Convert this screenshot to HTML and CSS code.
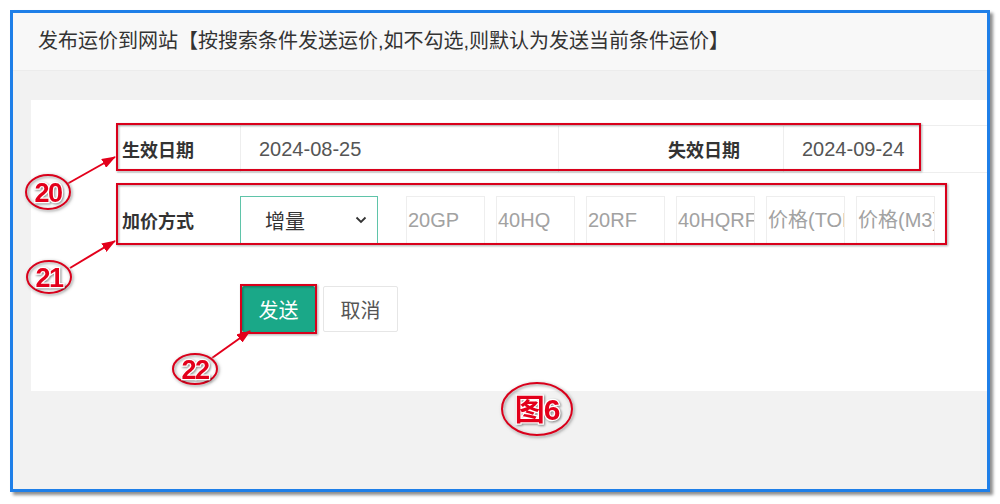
FILE: index.html
```html
<!DOCTYPE html>
<html lang="zh-CN">
<head>
    <meta charset="UTF-8">
    <title>发布运价到网站</title>
    <link rel="stylesheet" href="styles.css">
</head>
<body>
    <div class="frame">
        <div class="dlg-title">发布运价到网站【按搜索条件发送运价,如不勾选,则默认为发送当前条件运价】</div>
        <div class="dlg-body">
            <div class="panel">
                <div class="date-row">
                    <div class="cell cell-label">生效日期</div>
                    <div class="cell cell-start">2024-08-25</div>
                    <div class="cell cell-label2">失效日期</div>
                    <div class="cell cell-end">2024-09-24</div>
                </div>

                <div class="price-row">
                    <div class="row-label">加价方式</div>
                    <div class="fake-select">
                        <span>增量</span>
                        <svg class="chevron" width="12" height="8" viewBox="0 0 12 8"><path d="M1.5 1.5 L6 6 L10.5 1.5" fill="none" stroke="#333" stroke-width="1.8"/></svg>
                    </div>
                    <input class="price" type="text" placeholder="20GP">
                    <input class="price" type="text" placeholder="40HQ">
                    <input class="price" type="text" placeholder="20RF">
                    <input class="price" type="text" placeholder="40HQRF">
                    <input class="price" type="text" placeholder="价格(TON)">
                    <input class="price" type="text" placeholder="价格(M3)">
                </div>

                <div class="actions">
                    <button class="btn btn-send">发送</button>
                    <button class="btn">取消</button>
                </div>
            </div>
        </div>
    </div>

    <!-- annotation marks drawn on top of the screenshot -->
    <svg class="marks" width="1000" height="504" viewBox="0 0 1000 504">
        <defs>
            <marker id="head" markerWidth="14" markerHeight="10" refX="13" refY="5" orient="auto" markerUnits="userSpaceOnUse">
                <path d="M0 0 L14 5 L0 10 Z" fill="#e3001b"/>
            </marker>
        </defs>
        <g class="boxes">
            <rect x="117" y="124" width="803" height="46"/>
            <rect x="117" y="184" width="829" height="60"/>
            <rect x="241" y="285" width="75" height="48"/>
        </g>
        <g class="arrows">
            <line x1="67" y1="184" x2="115" y2="157" marker-end="url(#head)"/>
            <line x1="70" y1="268" x2="115" y2="241" marker-end="url(#head)"/>
            <line x1="212" y1="358" x2="250" y2="331" marker-end="url(#head)"/>
        </g>
        <g class="bubbles">
            <ellipse cx="48" cy="192" rx="22" ry="17"/>
            <ellipse cx="49" cy="277" rx="22" ry="16"/>
            <ellipse cx="195" cy="369" rx="22" ry="15"/>
            <ellipse cx="537" cy="409" rx="35" ry="26"/>
        </g>
        <g class="nums">
            <text x="48" y="202">20</text>
            <text x="49" y="287">21</text>
            <text x="195" y="379">22</text>
            <text class="fig" x="537" y="420">图6</text>
        </g>
    </svg>
</body>
</html>
```

FILE: styles.css
```css
body {
    margin: 0;
    background-color: #fff;
    font-family: 'Liberation Sans', 'Noto Sans CJK SC', sans-serif;
    color: #333;
    position: relative;
    width: 1000px;
    height: 504px;
    overflow: hidden;
}

.frame {
    box-sizing: border-box;
    margin: 10px 0 0 10px;
    width: 980px;
    height: 482px;
    border: 3px solid #1f7fe8;
    box-shadow: 3px 3px 3px rgba(0, 0, 0, 0.45);
    display: flex;
    flex-direction: column;
    background-color: #f2f2f2;
}

.dlg-title {
    height: 57px;
    line-height: 56px;
    padding-left: 25px;
    font-size: 20px;
    color: #333;
    background-color: #f8f8f8;
    border-bottom: 1px solid #ececec;
    white-space: nowrap;
}

.dlg-body {
    flex: 1;
    padding: 29px 0 0 18px;
}

.panel {
    height: 291px;
    background-color: #fff;
}

/* date row */
.date-row {
    display: flex;
    height: 46px;
    margin-left: 86px;
    position: relative;
    top: 25px;
    border-top: 1px solid #eee;
    border-bottom: 1px solid #eee;
}

.cell {
    box-sizing: border-box;
    display: flex;
    align-items: center;
    font-size: 20px;
    color: #555;
}

.cell-label,
.cell-label2 {
    font-size: 18px;
    font-weight: bold;
    color: #333;
}

.cell-label {
    width: 123px;
    padding-left: 5px;
}

.cell-start {
    width: 318px;
    padding-left: 18px;
    border-left: 1px solid #eee;
}

.cell-label2 {
    width: 225px;
    justify-content: flex-end;
    padding-right: 43px;
    border-left: 1px solid #eee;
}

.cell-end {
    flex: 1;
    padding-left: 18px;
    border-left: 1px solid #eee;
}

/* price row */
.price-row {
    display: flex;
    align-items: center;
    margin: 48px 0 0 86px;
    height: 48px;
}

.row-label {
    box-sizing: border-box;
    width: 123px;
    padding-left: 5px;
    font-size: 18px;
    font-weight: bold;
}

.fake-select {
    box-sizing: border-box;
    width: 138px;
    height: 48px;
    border: 1px solid #5fc4a9;
    padding: 0 10px 0 24px;
    display: flex;
    align-items: center;
    justify-content: space-between;
    font-size: 20px;
    color: #333;
    margin-right: 28px;
}

.price {
    box-sizing: border-box;
    width: 79px;
    height: 48px;
    margin: 0 11px 0 0;
    padding: 0 0 0 1px;
    border: 1px solid #eee;
    font-family: 'Liberation Sans', 'Noto Sans CJK SC', sans-serif;
    font-size: 20px;
    outline: none;
}

.price::placeholder {
    color: #a2a2a2;
}

/* buttons */
.actions {
    display: flex;
    margin: 42px 0 0 211px;
}

.btn {
    box-sizing: border-box;
    height: 46px;
    width: 75px;
    border: 1px solid #e6e6e6;
    background-color: #fff;
    color: #555;
    font-family: 'Liberation Sans', 'Noto Sans CJK SC', sans-serif;
    font-size: 20px;
    padding: 0;
    margin-right: 8px;
    border-radius: 2px;
}

.btn-send {
    width: 73px;
    border: none;
    background-color: #1aa888;
    color: #fff;
}

/* annotations */
.marks {
    position: absolute;
    top: 0;
    left: 0;
    pointer-events: none;
}

.boxes rect {
    fill: none;
    stroke: #d9001b;
    stroke-width: 2;
    filter: drop-shadow(1px 1px 1px rgba(0, 0, 0, 0.35));
}

.arrows line {
    stroke: #e3001b;
    stroke-width: 2;
}

.bubbles ellipse {
    fill: none;
    stroke: #d9001b;
    stroke-width: 2;
    filter: drop-shadow(0 0 1.5px #fff) drop-shadow(1px 1px 1px rgba(0, 0, 0, 0.4));
}

.nums text {
    font-family: 'Liberation Sans', 'Noto Sans CJK SC', sans-serif;
    font-size: 27px;
    font-weight: bold;
    fill: #e3001b;
    stroke: #fff;
    stroke-width: 2.5px;
    paint-order: stroke;
    text-anchor: middle;
    letter-spacing: -1.5px;
    filter: drop-shadow(1px 1px 1px rgba(0, 0, 0, 0.45));
}

.nums .fig {
    font-size: 30px;
    letter-spacing: -1px;
}
```
